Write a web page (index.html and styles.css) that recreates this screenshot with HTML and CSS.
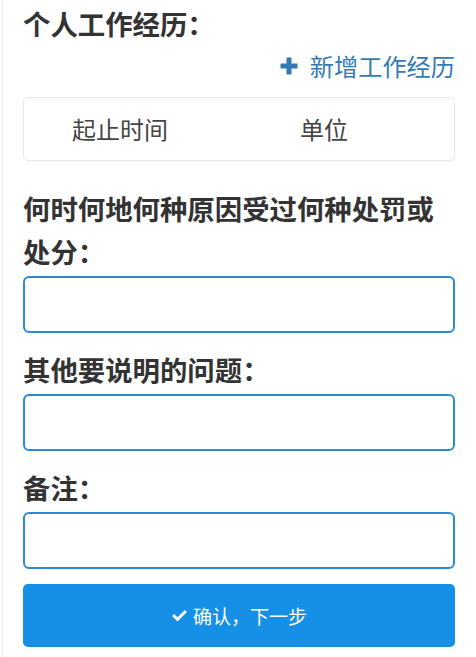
FILE: index.html
```html
<!DOCTYPE html>
<html lang="zh-CN">
<head>
<meta charset="utf-8">
<title>个人工作经历</title>
<link rel="stylesheet" href="styles.css">
</head>
<body>
<div class="page">
  <h2 class="section-title">个人工作经历：</h2>
  <div class="add-row">
    <a class="add-link" href="#">
      <svg class="plus-icon" viewBox="0 0 18 18" width="18" height="18" aria-hidden="true">
        <path d="M7 0.5h4a0.5 0.5 0 0 1 0.5 0.5v5.5H17a0.5 0.5 0 0 1 0.5 0.5v4a0.5 0.5 0 0 1-0.5 0.5h-5.5V17a0.5 0.5 0 0 1-0.5 0.5H7a0.5 0.5 0 0 1-0.5-0.5v-5.5H1a0.5 0.5 0 0 1-0.5-0.5V7a0.5 0.5 0 0 1 0.5-0.5h5.5V1a0.5 0.5 0 0 1 0.5-0.5z" fill="currentColor"/>
      </svg>
      <span>新增工作经历</span>
    </a>
  </div>
  <div class="table-card">
    <div class="th th-time">起止时间</div>
    <div class="th th-unit">单位</div>
  </div>

  <div class="field">
    <label class="field-label">何时何地何种原因受过何种处罚或处分：</label>
    <div class="input-box"></div>
  </div>
  <div class="field">
    <label class="field-label">其他要说明的问题：</label>
    <div class="input-box"></div>
  </div>
  <div class="field">
    <label class="field-label">备注：</label>
    <div class="input-box"></div>
  </div>

  <button class="btn-next" type="button">
    <svg class="check-icon" viewBox="0 0 18 14" width="17" height="13" aria-hidden="true">
      <path d="M1 7.6l2.2-2.2 3.6 3.6L14.8 1 17 3.2 6.8 13.4z" fill="currentColor"/>
    </svg>
    <span>确认，下一步</span>
  </button>
</div>
</body>
</html>
```

FILE: styles.css
```css
* { box-sizing: border-box; }

html, body {
  margin: 0;
  padding: 0;
  background: #ffffff;
}

body {
  font-family: "Noto Sans CJK SC", "Noto Sans", sans-serif;
  color: #333333;
}

.page {
  margin-left: 2px;
  border-left: 1px solid #ededed;
  padding: 2px 21px 0 20px;
  min-height: 657px;
  display: flex;
  flex-direction: column;
}

.section-title {
  margin: 0;
  font-size: 27.4px;
  line-height: 43px;
  font-weight: 700;
  color: #333333;
}

.add-row {
  margin-top: 5px;
  display: flex;
  justify-content: flex-end;
}

.add-link {
  display: flex;
  align-items: center;
  gap: 12px;
  color: #3579b6;
  text-decoration: none;
  font-size: 24.2px;
  line-height: 32px;
}

.plus-icon {
  display: block;
  flex: none;
}

.table-card {
  margin-top: 15px;
  height: 64px;
  border: 1px solid #e9e9e9;
  border-radius: 5px;
  box-shadow: 0 1px 2px rgba(0, 0, 0, 0.04);
  display: flex;
  align-items: center;
}

.th {
  font-size: 24px;
  color: #444444;
  line-height: 32px;
}

.th-time {
  padding-left: 48px;
}

.th-unit {
  padding-left: 132px;
}

.field {
  margin-top: 15px;
  display: flex;
  flex-direction: column;
}

.table-card + .field {
  margin-top: 26px;
}

.field-label {
  font-size: 27.4px;
  line-height: 43px;
  font-weight: 700;
  color: #333333;
  margin-bottom: 3px;
}

.input-box {
  height: 57px;
  border: 2px solid #2a8ad7;
  border-radius: 6px;
  background: #ffffff;
}

.btn-next {
  margin-top: 15px;
  height: 63px;
  width: 100%;
  border: none;
  border-radius: 5px;
  background: #1590e6;
  color: #ffffff;
  font-family: "Noto Sans CJK SC", "Noto Sans", sans-serif;
  font-size: 19px;
  display: flex;
  align-items: center;
  justify-content: center;
  gap: 5px;
  padding: 0;
}

.check-icon {
  display: block;
  flex: none;
}
```
